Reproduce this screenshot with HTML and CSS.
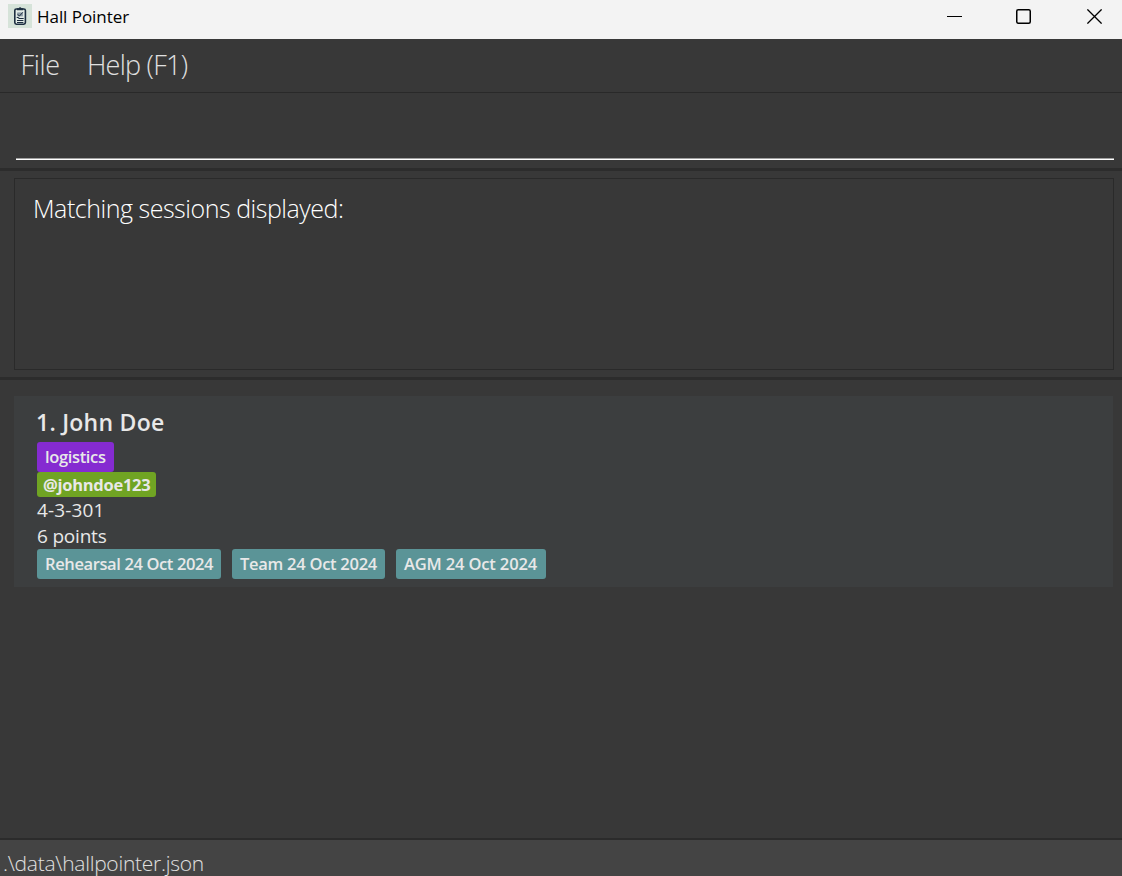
FILE: index.html
```html
<!DOCTYPE html>
<html lang="en">
<head>
<meta charset="utf-8">
<title>Hall Pointer</title>
<link rel="stylesheet" href="styles.css">
</head>
<body>
<div class="window">
  <header class="titlebar">
    <svg class="app-icon" viewBox="0 0 24 24" width="24" height="24">
      <rect width="24" height="24" fill="#d6e3d9"/>
      <rect x="6.8" y="5" width="10.6" height="15.2" rx="1.6" fill="#e3ece6" stroke="#1d2e40" stroke-width="1.6"/>
      <path d="M9 6.2V4.3h1.7a1.5 1.5 0 0 1 2.8 0h1.7v1.9z" fill="#1d2e40"/>
      <path d="M9.3 8.4h5.6v4H9.3z" fill="#8d9ca5"/>
      <path d="M9.4 10.2l2 1.8 3.4-3.7M8.7 13.5h2v1M10.7 14.5h5M9 16.5h6.4M9 18.5h6.4" fill="none" stroke="#1d2e40" stroke-width="1"/>
    </svg>
    <span class="title">Hall Pointer</span>
    <div class="controls">
      <svg width="15" height="15" viewBox="0 0 15 15"><path d="M0 7.5h15" stroke="#000"/></svg>
      <svg width="15" height="15" viewBox="0 0 15 15"><rect x=".75" y=".75" width="13.5" height="13.5" rx="1.5" fill="none" stroke="#000" stroke-width="1.5"/></svg>
      <svg width="15" height="15" viewBox="0 0 15 15"><path d="M.4.4l14.2 14.2M14.6.4L.4 14.6" stroke="#000" stroke-width="1.3"/></svg>
    </div>
  </header>
  <nav class="menubar"><span class="menu-file">File</span><span class="menu-help">Help (F1)</span></nav>
  <section class="command"><div class="command-line"></div></section>
  <section class="result"><div class="result-box"><span class="result-text">Matching sessions displayed:</span></div></section>
  <main class="list">
    <article class="card">
      <h1 class="name">1. John Doe</h1>
      <div class="tag">logistics</div>
      <div class="handle">@johndoe123</div>
      <div class="room">4-3-301</div>
      <div class="points">6 points</div>
      <div class="sessions"><span class="session rehearsal">Rehearsal 24 Oct 2024</span><span class="session team">Team 24 Oct 2024</span><span class="session agm">AGM 24 Oct 2024</span></div>
    </article>
  </main>
  <footer class="status"><span class="path">.\data\hallpointer.json</span></footer>
</div>
</body>
</html>
```
FILE: styles.css
```css
* { box-sizing: border-box; }
body { margin: 0; overflow: hidden; font-family: "Open Sans", "Noto Sans", sans-serif; background: #383838; }
.window { width: 1122px; height: 876px; display: flex; flex-direction: column; white-space: nowrap; }
.titlebar { height: 39px; background: #f3f3f3; display: flex; align-items: flex-start; padding: 4px 20px 0 8px; color: #000; }
.app-icon { flex: none; }
.title { margin-left: 5px; font-size: 17px; line-height: 25px; letter-spacing: -0.05px; }
.controls { margin-left: auto; display: flex; padding-top: 5px; }
.controls svg { margin-left: 55px; }
.controls svg:nth-child(2) { margin-left: 54px; }
.controls svg:nth-child(3) { margin-left: 56px; }
.menubar { height: 54px; padding-left: 20.5px; display: flex; gap: 27px; font-size: 27px; font-weight: 300; line-height: 52px; color: #e0e0e0; border-bottom: 1px solid #292929; }
.menu-file { letter-spacing: -0.3px; }
.menu-help { letter-spacing: -0.75px; }
.command { height: 78px; padding: 65px 8px 0 16px; border-bottom: 3px solid #2c2c2c; }
.command-line { height: 2px; border-top: 1px solid #a0a0a0; background: #fff; }
.result { height: 209px; padding: 7px 8px 8px 14px; border-bottom: 3px solid #2c2c2c; }
.result-box { height: 192px; border: 1px solid #2a2a2a; padding: 11px 18px; font-size: 25px; font-weight: 300; line-height: 36px; letter-spacing: -0.47px; color: #fff; }
.list { flex: 1; padding: 16px 9px 0 14px; }
.card { height: 191px; background: #3c3e3f; padding: 8px 23px; display: flex; flex-direction: column; align-items: flex-start; color: #e8e8e8; }
.name { margin: 0 0 0 -1px; height: 38px; font-size: 23px; font-weight: 600; line-height: 37px; letter-spacing: 0.25px; }
.tag { width: 77px; height: 30px; padding: 0 8px; border-radius: 3px; background: #852bd1; font-size: 16.5px; line-height: 30px; font-weight: 600; letter-spacing: -0.35px; }
.handle { width: 119px; height: 25px; padding: 0 6px; border-radius: 3px; background: #70a423; font-size: 16.5px; line-height: 25px; font-weight: 700; letter-spacing: -0.28px; }
.room, .points { height: 26px; font-size: 19px; line-height: 27px; }
.room { letter-spacing: 0.15px; }
.points { letter-spacing: -0.2px; }
.sessions { display: flex; gap: 11px; }
.session { height: 30px; padding: 0 8px; border-radius: 3px; background: #5b9497; font-size: 16.5px; line-height: 30px; font-weight: 600; letter-spacing: -0.38px; }
.rehearsal { width: 184px; }
.team { width: 153px; letter-spacing: -0.27px; }
.agm { width: 150px; letter-spacing: -0.15px; }
.status { height: 38px; padding-left: 3px; border-top: 2px solid #2b2b2b; background: #444; color: #e0e0e0; font-size: 21px; font-weight: 300; line-height: 47px; letter-spacing: -0.27px; overflow: hidden; }
```
